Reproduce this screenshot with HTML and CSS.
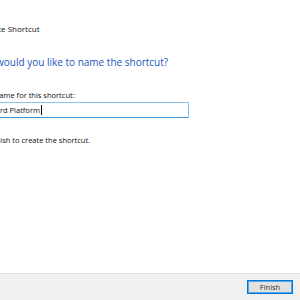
FILE: index.html
```html
<!DOCTYPE html>
<html>
<head>
<meta charset="utf-8">
<link rel="stylesheet" href="styles.css">
</head>
<body>
<div class="page">
  <div class="main">
    <div class="title">Create Shortcut</div>
    <div class="content">
      <h1 class="heading">What would you like to name the shortcut?</h1>
      <div class="label">Type a name for this shortcut:</div>
      <div class="field"><span class="value">rd Platform</span></div>
      <div class="hint">Click Finish to create the shortcut.</div>
    </div>
  </div>
  <div class="footer">
    <button class="btn">Finish</button>
  </div>
</div>
</body>
</html>
```
FILE: styles.css
```css
html, body {
  margin: 0;
  padding: 0;
  background: #ffffff;
}
body {
  width: 300px;
  height: 300px;
  overflow: hidden;
  font-family: "Open Sans", "Noto Sans", sans-serif;
  color: #111111;
}
.page {
  display: flex;
  flex-direction: column;
  height: 300px;
}
.main {
  flex: 1;
  overflow: hidden;
}
.title {
  font-size: 8px;
  line-height: 12px;
  margin-top: 23px;
  margin-left: -19px;
  white-space: nowrap;
}
.content {
  margin-left: -30px;
}
.heading {
  font-weight: normal;
  font-size: 10px;
  line-height: 14px;
  color: #1a56bd;
  margin: 20px 0 0 -1px;
  white-space: nowrap;
}
.label {
  font-size: 7.5px;
  line-height: 11px;
  margin-top: 21px;
  white-space: nowrap;
}
.field {
  margin-top: 1px;
  width: 219px;
  height: 16px;
  box-sizing: border-box;
  border: 1px solid #8fc0ea;
  border-bottom-color: #3c97e0;
  padding: 2px 0 0 29px;
  font-size: 7.5px;
  line-height: 10px;
  white-space: nowrap;
}
.value {
  border-right: 1px solid #000;
  padding-right: 1px;
}
.hint {
  font-size: 7.5px;
  line-height: 11px;
  margin-top: 17px;
  margin-left: 2px;
  white-space: nowrap;
}
.footer {
  height: 27px;
  box-sizing: border-box;
  border-top: 1px solid #dfdfdf;
  background: #f0f0f0;
  display: flex;
  justify-content: flex-end;
  align-items: flex-start;
  padding: 6px 7px 0 0;
}
.btn {
  width: 46px;
  height: 14px;
  box-sizing: border-box;
  border: 1px solid #0078d7;
  box-shadow: inset 0 0 0 1px #5aa6e6;
  background: #e1e1e1;
  font-family: "Open Sans", "Noto Sans", sans-serif;
  font-size: 7.5px;
  color: #333;
  padding: 0;
  line-height: 10px;
}
```
